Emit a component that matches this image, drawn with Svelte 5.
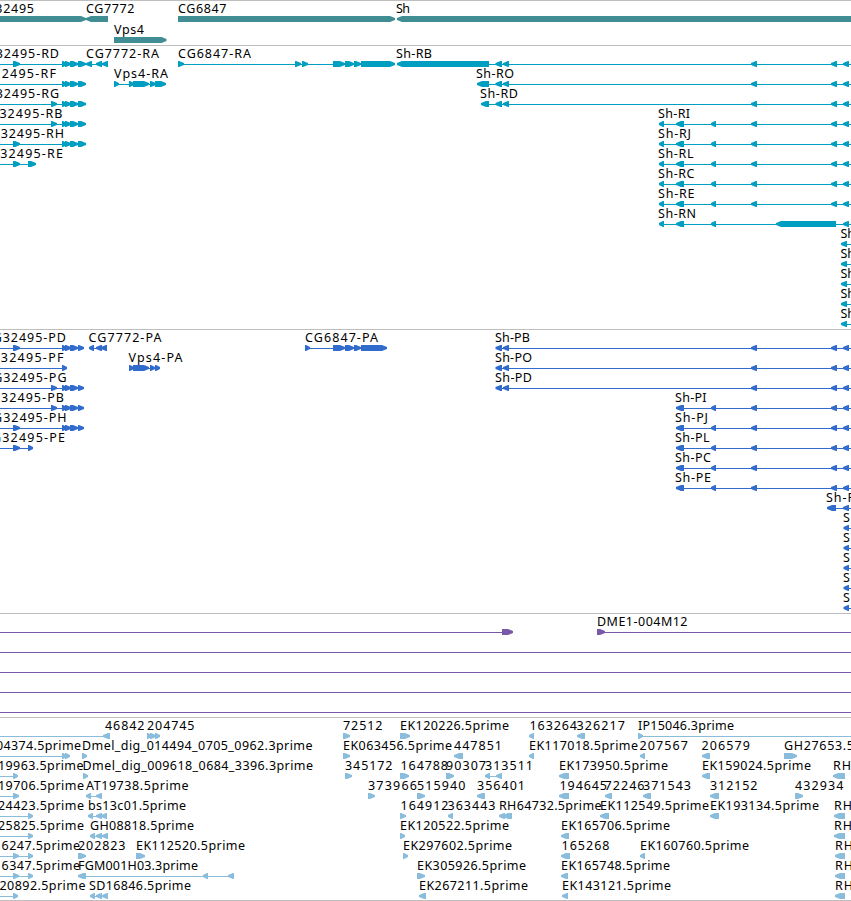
<script>
  // Glyph notation: "r13-20" points right, "l86-92" points left, "-0-86" is a thin connecting line.
  // Label notation: [text, start, end].
  const exonsR = 'r62-67 r65-71 r70-78 r78-86';
  const exonsP = 'r62-67 r65-71 r70-78 r78-84';
  const shTail = 'l751-757 l831-837 l843-849';
  const shStart = 'l495.5-502 l503-509 ' + shTail;
  const left = (name, end) => [name, end - 82, end];

  const tracks = [
    {
      id: 'gene', height: 45, pitch: 21, color: '#408e94',
      rows: [
        [[['CG32495', -23, 34], ['CG7772', 86, 134.5], ['CG6847', 178, 226.5], ['Sh', 396, 410]],
          'r-10-86 l86-108 r178-395 l397-860'],
        [[['Vps4', 114, 144]], 'r114-166.5']
      ]
    },
    {
      id: 'transcript', height: 284, pitch: 20, color: '#009ec0',
      rows: [
        [[left('CG32495-RD', 59), ['CG7772-RA', 86, 159], ['CG6847-RA', 178, 251], ['Sh-RB', 396, 432]],
          `-0-108 r13-20 ${exonsR} l86-92 l96-102 l102-108 -178-395 r178-184 r295-301 r302-308 r333-345 r345-354 r354-361 r361-395 -397-851 l397-489 ${shStart}`],
        [[left('CG32495-RF', 56), ['Vps4-RA', 114, 168], ['Sh-RO', 476, 514]],
          `-0-86 ${exonsR} -114-166 r114-119 r129-134 r133-149 r150-156 r155-166 -477-851 l477-489 ${shStart}`],
        [[left('CG32495-RG', 59), ['Sh-RD', 480, 518]],
          `-0-86 r51-57 ${exonsR} -481-851 l481-489 ${shStart}`],
        ...[['CG32495-RB', 62.5, 'r51-57 ' + exonsR, 'RI', 690], ['CG32495-RH', 64, 'r13-20 ' + exonsR, 'RJ', 691],
          ['CG32495-RE', 63, 'r13-20 r28-36', 'RL', 693.5]].map(([n, end, g, s, e]) => [
          [left(n, end), ['Sh-' + s, 658, e]],
          `-0-${n.endsWith('E') ? 36 : 86} ${g} -659-851 l659-664 l676-684 l711-716 ${shTail}`]),
        ...[['Sh-RC', 694.5], ['Sh-RE', 694.5]].map(([n, e]) => [[[n, 658, e]],
          `-659-851 l659-664 l676-684 l711-716 ${shTail}`]),
        [[['Sh-RN', 658, 696]], '-659-851 l659-664 l676-684 l711-716 l776-836 l843-849'],
        ...Array.from({ length: 5 }, () => [[['Sh', 840.5, 855]], '-841-851 l841-847'])
      ]
    },
    {
      id: 'cds', height: 284, pitch: 20, color: '#316ccd',
      rows: [
        [[left('CG32495-PD', 66), ['CG7772-PA', 88.5, 161.5], ['CG6847-PA', 305, 378], ['Sh-PB', 495, 530]],
          `-0-84 r13-20 ${exonsP} -89-107 l89-94 l96-102 l101-107 -305-387 r305-310 r333-345 r345-354 r354-361 r361-387 -496-851 ${shStart}`],
        [[left('CG32495-PF', 63.5), ['Vps4-PA', 128.5, 182.5], ['Sh-PO', 495, 532]],
          `-0-67 r62-67 -129-160 r129-134 r133-149 r150-155 r155-160 -496-851 ${shStart}`],
        [[left('CG32495-PG', 66.5), ['Sh-PD', 495, 532]],
          `-0-84 r51-57 ${exonsP} -496-851 ${shStart}`],
        ...[['CG32495-PB', 64, 'r51-57 ' + exonsP, 'PI', 706.5], ['CG32495-PH', 66.5, 'r13-20 ' + exonsP, 'PJ', 708],
          ['CG32495-PE', 65, 'r13-20 r28-33', 'PL', 709.5]].map(([n, end, g, s, e]) => [
          [left(n, end), ['Sh-' + s, 675, e]],
          `-0-${n.endsWith('E') ? 33 : 84} ${g} -676-851 l676-684 l711-716 ${shTail}`]),
        ...[['Sh-PC', 711], ['Sh-PE', 711]].map(([n, e]) => [[[n, 675, e]],
          `-676-851 l676-684 l711-716 ${shTail}`]),
        [[['Sh-P', 826, 855]], '-827-851 l827-836 l843-849'],
        ...Array.from({ length: 5 }, () => [[['S', 843, 850]], '-844-851 l843.5-849'])
      ]
    },
    {
      id: 'bac', height: 104, pitch: 20, color: '#7858a8',
      rows: [
        [[['DME1-004M12', 597, 687.5]], '-0-503 r502-513 -597-851 r597-605'],
        ...Array.from({ length: 4 }, () => [[], '-0-851'])
      ]
    },
    {
      id: 'est', height: 183, pitch: 20, color: '#8abcdc',
      rows: [
        [[['46842', 105, 144.5], ['204745', 147, 194.5], ['72512', 343, 382.5], ['EK120226.5prime', 400, 509],
          ['163264', 529.5, 577], ['326217', 576.5, 625], ['IP15046.3prime', 638, 734]],
          '-0-104 l103-110 r147-152 r150-156 r155-160 r343-350 r400-410 l529-534 l577-585 -638-851 r638-643'],
        [[['04374.5prime', -4, 81], ['Dmel_dig_014494_0705_0962.3prime', 82, 312.5], ['EK063456.5prime', 343, 452],
          ['447851', 454, 502], ['EK117018.5prime', 529, 638], ['207567', 639.5, 688], ['206579', 701.5, 750], ['GH27653.5', 784, 854]],
          '-0-64 r62-67 r65-70 r82-87 r343-350 l454-463 l529-534 l640-645 l702-710 r784-797'],
        [[['19963.5prime', -2, 83.5], ['Dmel_dig_009618_0684_3396.3prime', 82.5, 313], ['345172', 345, 392.5], ['164788', 400.5, 448],
          ['90307', 446, 486], ['313511', 485, 533], ['EK173950.5prime', 559, 668], ['EK159024.5prime', 702, 811], ['RH', 833, 851]],
          '-0-14 r13-18 r83-88 r345-352 r400-409 r446-454 -485-502 l485-490 l496-502 l559-569 l702-710 l833-845'],
        [[['19706.5prime', -2, 84], ['AT19738.5prime', 86, 188.5], ['373966', 368, 417], ['515940', 417, 465.5], ['356401', 477, 525],
          ['194645', 559.5, 607], ['72246', 604.5, 644.5], ['371543', 643, 691], ['312152', 710, 757.5], ['432934', 795, 843.5]],
          '-0-14 r13-19 -86-101 l86-91 l96-102 r368-375 r417-425 l477-485 l559-569 l605-612 l643-651 l710-719 r795-803'],
        [[['24423.5prime', -2, 84], ['bs13c01.5prime', 88, 186], ['164912', 400.5, 448.5], ['363443', 447.5, 495.5], ['RH64732.5prime', 499, 601.5],
          ['EK112549.5prime', 600, 709], ['EK193134.5prime', 710, 819], ['RH', 834, 852]],
          '-0-28 r28-33 -88-107 l88-93 l96-102 l101-107 r400-406 l448-453 l499-505 l503-512 l600-609 l710-719 l834-845'],
        [[['25825.5prime', -2, 84], ['GH08818.5prime', 90, 194], ['EK120522.5prime', 400, 509], ['EK165706.5prime', 561, 670], ['RH', 834, 852]],
          '-0-28 r28-33 -90-108 l90-95 l96-102 l102-108 r400-405 l561-569 l834-845'],
        [[['16247.5prime', -6, 80], ['202823', 78, 125.5], ['EK112520.5prime', 136, 245], ['EK297602.5prime', 403, 512],
          ['165268', 561.5, 609.5], ['EK160760.5prime', 640, 749], ['RH', 835, 853]],
          '-0-28 r13-19 r28-33 r78-86 r136-145 r403-408 l561-570 l640-645 l835-845'],
        [[['16347.5prime', -6, 80], ['FGM001H03.3prime', 78, 198], ['EK305926.5prime', 417, 526], ['EK165748.5prime', 561, 670], ['RH', 835, 853]],
          '-0-28 r13-19 r28-33 -78-234 l78-86 l203-208 l228-234 r417-425 l561-568 l835-845'],
        [[['20892.5prime', -0.5, 85.5], ['SD16846.5prime', 89, 191], ['EK267211.5prime', 419, 528], ['EK143121.5prime', 562, 671], ['RH', 835, 853]],
          '-0-14 r13-18 -90-108 l90-95 l96-102 l102-108 l419-426 l562-568 l835-845']
      ]
    }
  ];

  function parse(glyphs) {
    return glyphs.split(' ').map((g) => {
      const [, kind, a, b] = g.match(/^([rl-])(-?[\d.]+)-([\d.]+)$/);
      return { kind, a: +a, b: +b };
    });
  }

  function arrow({ kind, a, b }) {
    const head = Math.min(5, b - a - 1);
    return kind === 'r'
      ? `${a},0 ${b - head},0 ${b},2 ${b},4 ${b - head},6 ${a},6`
      : `${b},0 ${a + head},0 ${a},2 ${a},4 ${a + head},6 ${b},6`;
  }
</script>

<main>
  {#each tracks as track (track.id)}
    <section class="track {track.id}" style:height="{track.height}px">
      <svg width="851" height={track.height - 1} style:color={track.color}>
        {#each track.rows as [labels, glyphs], i}
          <g transform="translate(0 {i * track.pitch})">
            {#each labels as [text, start, end]}
              <text x={start} y="12" textLength={end - start}>{text}</text>
            {/each}
            <g class="glyphs" transform="translate(0 15)">
              {#each parse(glyphs) as glyph}
                {#if glyph.kind === '-'}
                  <rect x={glyph.a} y="3" width={glyph.b - glyph.a} height="1" />
                {:else}
                  <polygon points={arrow(glyph)} />
                {/if}
              {/each}
            </g>
          </g>
        {/each}
      </svg>
    </section>
  {/each}
</main>

<style>
  :global(body) {
    margin: 0;
    background: #fff;
  }

  main {
    display: flex;
    flex-direction: column;
    width: 851px;
    overflow: hidden;
    border-bottom: 1px solid #bebebe;
  }

  .track {
    box-sizing: border-box;
    flex: none;
    border-top: 1px solid #bebebe;
    overflow: hidden;
  }

  svg {
    display: block;
  }

  text {
    font: 12.5px 'Noto Sans', 'DejaVu Sans', sans-serif;
    fill: #000;
    white-space: pre;
  }

  .glyphs {
    fill: currentColor;
  }
</style>
